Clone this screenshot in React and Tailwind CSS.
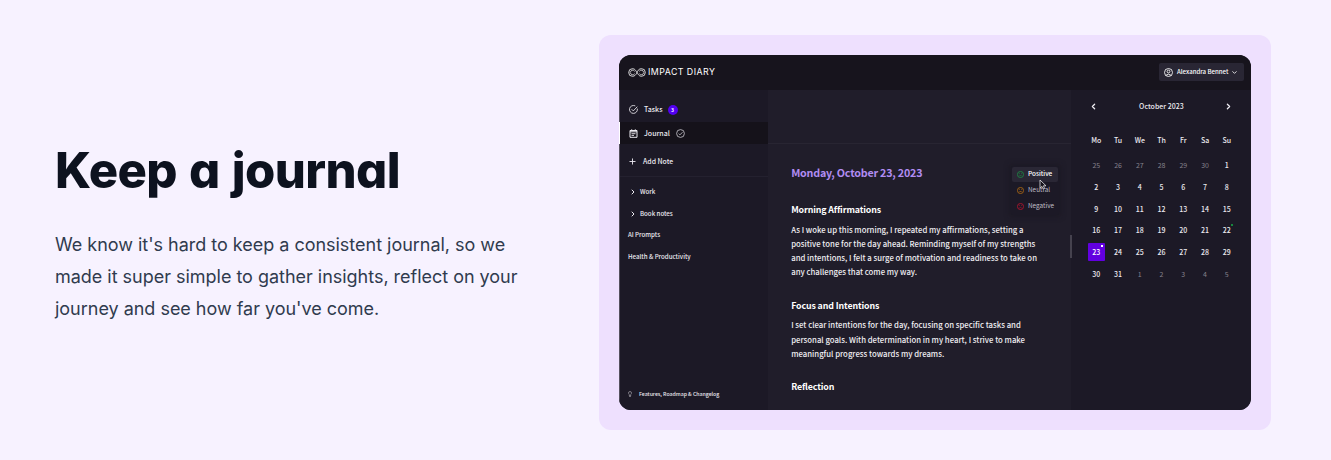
import clsx from 'clsx'
import { ChevronDown, ChevronLeft, ChevronRight, Lightbulb, Plus } from 'lucide-react'

const WEEKDAYS = ['Mo', 'Tu', 'We', 'Th', 'Fr', 'Sa', 'Su']

// Monday-first weeks for October 2023, padded with the neighbouring months
const DAYS = [
  ...[25, 26, 27, 28, 29, 30].map(day => ({ day, outside: true })),
  ...Array.from({ length: 31 }, (_, i) => ({ day: i + 1 })),
  ...[1, 2, 3, 4, 5].map(day => ({ day, outside: true })),
]

const ENTRIES = [
  {
    title: 'Morning Affirmations',
    lines: [
      'As I woke up this morning, I repeated my affirmations, setting a',
      'positive tone for the day ahead. Reminding myself of my strengths',
      'and intentions, I felt a surge of motivation and readiness to take on',
      'any challenges that come my way.',
    ],
  },
  {
    title: 'Focus and Intentions',
    lines: [
      'I set clear intentions for the day, focusing on specific tasks and',
      'personal goals. With determination in my heart, I strive to make',
      'meaningful progress towards my dreams.',
    ],
  },
  { title: 'Reflection', lines: [] },
]

const MOODS = [
  { label: 'Positive', color: 'text-[#1d8a45]', mouth: 'M4.8 8.4q2.2 2 4.4 0', active: true },
  { label: 'Neutral', color: 'text-[#b06a12]', mouth: 'M4.8 9h4.4' },
  { label: 'Negative', color: 'text-[#b3152f]', mouth: 'M4.8 9.8q2.2-2 4.4 0' },
]

function Face({ className, mouth }) {
  return (
    <svg viewBox="0 0 14 14" fill="none" stroke="currentColor" className={clsx('size-[7px] shrink-0', className)}>
      <circle cx="7" cy="7" r="6.1" strokeWidth="1.7" />
      <path d={mouth} strokeWidth="1.4" />
      <path d="M4.8 4.4v1.4M9.2 4.4v1.4" strokeWidth="1.5" />
    </svg>
  )
}

function CheckCircle({ className, open }) {
  return (
    <svg viewBox="0 0 18 18" fill="none" stroke="currentColor" strokeWidth="1.7" className={clsx('size-[9px] shrink-0', className)}>
      {open ? <path d="M16.6 7.2A7.9 7.9 0 1 1 12.6 1.9" /> : <circle cx="9" cy="9" r="7.8" />}
      <path d={open ? 'm5.2 8.4 3.4 3.4 8-8.4' : 'm5.4 9.2 2.5 2.5 5-5.2'} />
    </svg>
  )
}

function JournalIcon() {
  return (
    <svg viewBox="0 0 18 18" fill="none" stroke="currentColor" strokeWidth="1.8" className="size-[9px] shrink-0">
      <path d="M2 3h14v13.6H2zM2 5.6h14" strokeWidth="2" />
      <path d="M5.4.5V3M12.6.5V3M5 9.4h8M5 12.8h5" />
    </svg>
  )
}

function UserIcon() {
  return (
    <svg viewBox="0 0 18 18" fill="none" stroke="currentColor" strokeWidth="1.7" className="size-[9px] shrink-0">
      <circle cx="9" cy="9" r="8" />
      <circle cx="9" cy="7" r="2.8" />
      <path d="M3.6 14.6q5.4-4.6 10.8 0" />
    </svg>
  )
}

function Logo() {
  return (
    <div className="flex items-center gap-[2px] text-white">
      {/* two nested loops crossing in the middle */}
      <svg viewBox="0 0 36 18" fill="none" stroke="currentColor" className="h-[9px] w-[18px] shrink-0">
        <path d="M15.6 5.4C14 2.8 11.8 1.4 9 1.4a7.6 7.6 0 0 0 0 15.2c4 0 6-2.4 8-5.600l2-4.400c2-3.200 4-5.200 8-5.200a7.6 7.6 0 0 1 0 15.2c-2.800 0-5-1.400-6.600-4" strokeWidth="1.6" />
        <path d="M13.4 6.6a4.7 4.7 0 1 0 0 4.800M22.600 11.400a4.7 4.7 0 1 0 0-4.800M15.600 5.400l4.800 7.200" strokeWidth="1.4" />
      </svg>
      <span className="text-[8.8px] leading-none font-normal tracking-[0.46px]">IMPACT DIARY</span>
    </div>
  )
}

function Header() {
  return (
    <header className="flex h-[35px] items-center justify-between bg-[#17141d] pr-[7px] pb-px pl-[9px] font-['Inter',sans-serif]">
      <Logo />
      <button className="flex h-[18px] w-[85px] items-center rounded-[2px] bg-[#292634] pl-[5px] font-['Noto_Sans_CJK_SC',sans-serif] text-[6.1px] font-medium text-white">
        <UserIcon />
        <span className="ml-[4px] whitespace-nowrap">Alexandra Bennet</span>
        <ChevronDown size={7} strokeWidth={2.8} className="ml-[3px]" />
      </button>
    </header>
  )
}

function Sidebar() {
  return (
    <aside className="flex w-[149px] shrink-0 flex-col border-l border-[#55515f] bg-[#1c1926] text-[6.15px] font-medium text-[#eceaf0]">
      <div className="mt-[8px] mb-px flex h-[23px] items-center pl-[9px] text-[7px]">
        <CheckCircle open />
        <span className="ml-[6px]">Tasks</span>
        <span className="ml-[5px] flex size-[10px] items-center justify-center rounded-full bg-[#5200f0] text-[5px] font-bold text-white">3</span>
      </div>
      <div className="-ml-px flex h-[22px] items-center border-l border-white bg-[#15121a] pl-[9px] text-[7px]">
        <JournalIcon />
        <span className="ml-[6px]">Journal</span>
        <CheckCircle className="ml-[6px] text-[#c4c2c9]" />
      </div>
      <div className="flex h-[33px] items-center border-b border-[#24212f] pt-[2px] pl-[8px] text-[6.9px]">
        <Plus size={9} strokeWidth={2.4} />
        <span className="ml-[6px]">Add Note</span>
      </div>
      <div className="mt-[4px] flex h-[22px] items-center pl-[9px]">
        <ChevronRight size={8} strokeWidth={3} />
        <span className="ml-[3px]">Work</span>
      </div>
      <div className="flex h-[21px] items-center pl-[9px]">
        <ChevronRight size={8} strokeWidth={3} />
        <span className="ml-[3px]">Book notes</span>
      </div>
      <div className="flex h-[22px] items-center pl-[8px]">AI Prompts</div>
      <div className="flex h-[22px] items-center pl-[8px]">Health &amp; Productivity</div>
      <div className="mt-auto mb-[5px] flex h-[22px] items-center pl-[7px] text-[5.2px]">
        <Lightbulb size={6} strokeWidth={1.8} />
        <span className="ml-[6px]">Features, Roadmap &amp; Changelog</span>
      </div>
    </aside>
  )
}

function MoodMenu() {
  return (
    <div className="absolute top-[76px] left-[243px] flex w-[48px] flex-col gap-px rounded-[2px] bg-[#1c1926] p-px text-[6.4px] shadow-[0_0_5px_2px_rgba(24,21,32,0.5)]">
      {MOODS.map(mood => (
        <div
          key={mood.label}
          className={clsx(
            'flex h-[15px] w-[46px] items-center gap-[4px] rounded-[2px] pb-px pl-[5px]',
            mood.active ? 'bg-[#2a2735] font-medium text-white' : 'text-[#bfbdc5]'
          )}
        >
          <Face className={mood.color} mouth={mood.mouth} />
          {mood.label}
        </div>
      ))}
      <svg viewBox="0 0 8 11" className="absolute top-[13px] left-[28px] h-[11px] w-[8px]">
        <path d="M1 1v8l2-1.6 1.4 2.6 1.2-.6L4.4 6.8H7z" fill="#15121a" stroke="#e5e4e8" strokeWidth=".8" />
      </svg>
    </div>
  )
}

function Journal() {
  return (
    <main className="relative flex w-[304px] shrink-0 flex-col border-r border-[#1c1926] bg-[#201d2a] text-[#f0eff3]">
      <div className="h-[54px] border-b border-[#282532]" />
      <div className="pl-[23.2px]">
        <h2 className="mt-[19px] h-[20px] text-[10.7px] leading-[20px] font-bold tracking-[-0.2px] text-[#b18cf2]">Monday, October 23, 2023</h2>
        <div className="mt-[20px] flex flex-col gap-[19px]">
          {ENTRIES.map(entry => (
            <section key={entry.title}>
              <h3 className="text-[8.8px] leading-[14px] font-bold tracking-[-0.11px] text-white">{entry.title}</h3>
              <div className="mt-[5.8px]">
                {entry.lines.map(line => (
                  <p key={line} className="text-[7.75px] leading-[14.2px] font-medium whitespace-nowrap">{line}</p>
                ))}
              </div>
            </section>
          ))}
        </div>
      </div>
      <MoodMenu />
      {/* scrollbar thumb */}
      <div className="absolute top-[145px] -right-px h-[23px] w-[2px] bg-[#45424e]" />
    </main>
  )
}

function Calendar() {
  return (
    <aside className="flex-1 bg-[#1c1926] pl-[13.4px] text-[7px] font-medium text-[#eceaf0]">
      <div className="mt-[6px] flex h-[20px] w-[153px] items-center justify-between px-[5px]">
        <ChevronLeft size={9} strokeWidth={3.4} className="-ml-px" />
        <span>October 2023</span>
        <ChevronRight size={9} strokeWidth={3.4} />
      </div>
      <div className="mt-[12px] grid w-[152.3px] grid-cols-7">
        {WEEKDAYS.map(name => (
          <div key={name} className="mb-[2.5px] flex h-[24px] items-center justify-center">{name}</div>
        ))}
        {DAYS.map(({ day, outside }, i) => {
          const selected = day === 23 && !outside
          return (
            <div key={i} className="flex h-[21.75px] items-center justify-center">
              <span
                className={clsx(
                  'relative flex h-[18px] w-[17px] items-center justify-center rounded-[1px]',
                  outside && 'font-normal text-[#85828c]',
                  selected && 'bg-[#6200e0] text-white'
                )}
              >
                {day}
                {selected && <i className="absolute top-[2px] right-[2px] size-[2px] bg-white" />}
                {day === 22 && <i className="absolute top-[2px] right-[2px] size-[2px] bg-[#18853d]" />}
              </span>
            </div>
          )
        })}
      </div>
    </aside>
  )
}

export default function App() {
  return (
    <section className="flex h-[460px] w-[1331px] overflow-hidden bg-[#f7f2ff]">
      <div className="w-[599px] shrink-0 pt-[137px] pl-[55px] font-['Inter',sans-serif]">
        <h1 className="text-[49px] leading-[68px] font-extrabold tracking-[-0.6px] whitespace-nowrap text-[#0d121f] [word-spacing:2px] [font-feature-settings:'cv11'_1]">
          Keep a journal
        </h1>
        <p className="mt-[24px] text-[18px] leading-8 tracking-[-0.02px] whitespace-nowrap text-[#303b4e]">
          We know it's hard to keep a consistent journal, so we
          <br />
          made it super simple to gather insights, reflect on your
          <br />
          journey and see how far you've come.
        </p>
      </div>
      <div className="mt-[35px] h-[395px] w-[672px] rounded-xl bg-[#eee0fe] p-5">
        <div className="flex h-[355px] flex-col overflow-hidden rounded-xl bg-[#1c1926] font-['Noto_Sans_CJK_SC',sans-serif]">
          <Header />
          <div className="flex min-h-0 flex-1">
            <Sidebar />
            <Journal />
            <Calendar />
          </div>
        </div>
      </div>
    </section>
  )
}
